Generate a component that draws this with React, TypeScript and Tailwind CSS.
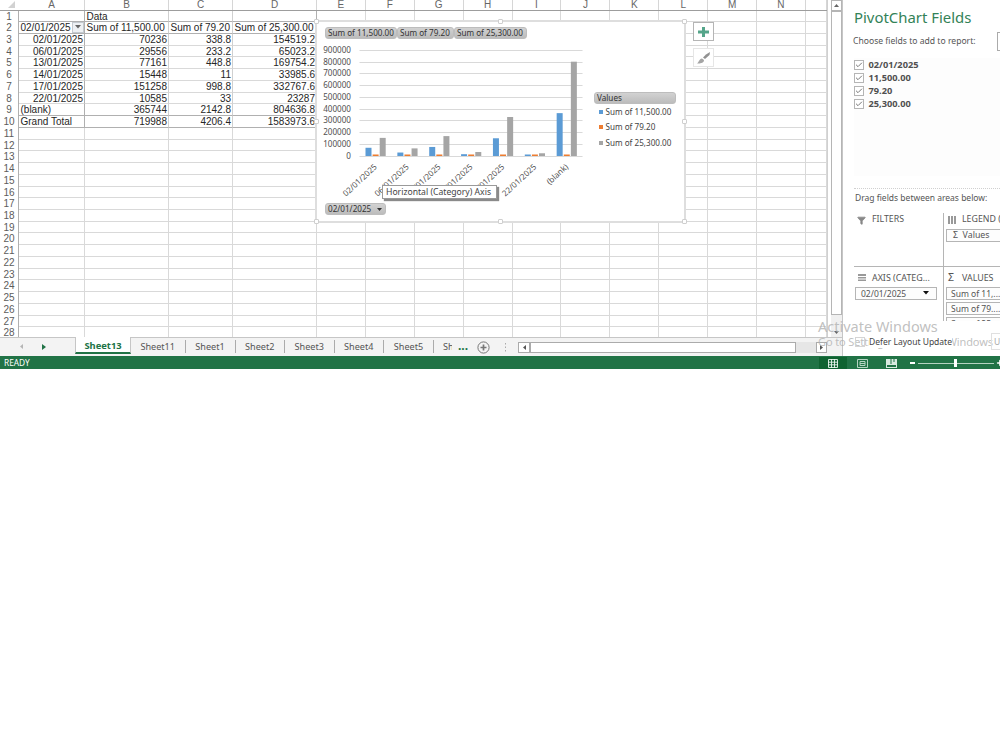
import React from 'react';
import { Filter, Plus, Check } from 'lucide-react';

interface Column {
  name: string;
  width: string;
}

const columns: Column[] = [
  { name: 'A', width: 'w-[66px]' },
  { name: 'B', width: 'w-[84px]' },
  { name: 'C', width: 'w-[64px]' },
  { name: 'D', width: 'w-[84px]' },
  ...['E', 'F', 'G', 'H', 'I', 'J', 'K', 'L', 'M', 'N'].map(name => ({ name, width: 'w-[48.9px]' })),
  { name: '', width: 'w-[21px]' }
];

const cells: string[][] = [
  ['', 'Data', '', ''],
  ['02/01/2025', 'Sum of 11,500.00', 'Sum of 79.20', 'Sum of 25,300.00'],
  ['02/01/2025', '70236', '338.8', '154519.2'],
  ['06/01/2025', '29556', '233.2', '65023.2'],
  ['13/01/2025', '77161', '448.8', '169754.2'],
  ['14/01/2025', '15448', '11', '33985.6'],
  ['17/01/2025', '151258', '998.8', '332767.6'],
  ['22/01/2025', '10585', '33', '23287'],
  ['(blank)', '365744', '2142.8', '804636.8'],
  ['Grand Total', '719988', '4206.4', '1583973.6']
];

const series = [
  { label: 'Sum of 11,500.00', color: '#5b9bd5', swatch: 'bg-[#5b9bd5]', column: 1 },
  { label: 'Sum of 79.20', color: '#ed7d31', swatch: 'bg-[#ed7d31]', column: 2 },
  { label: 'Sum of 25,300.00', color: '#a5a5a5', swatch: 'bg-[#a5a5a5]', column: 3 }
];

const sheets = ['Sheet11', 'Sheet1', 'Sheet2', 'Sheet3', 'Sheet4', 'Sheet5'];
const sheetWidths = ['w-[54.5px]', 'w-[50px]', 'w-[49.5px]', 'w-[49.5px]', 'w-[49.5px]', 'w-[50px]'];

const cellBorder = (row: number, col: number) => {
  if (col > 3 || row > 9) return 'border-r-[#d9d9d9] border-b-[#d9d9d9]';
  const right = col === 0 || col === 3 ? 'border-r-[#b0b0b0]' : 'border-r-[#d0d0d0]';
  const bottom = row < 2 || row > 7 ? 'border-b-[#b0b0b0]' : 'border-b-[#d9d9d9]';
  return `${right} ${bottom}`;
};

const Grid: React.FC = () => (
  <div className="w-[827px] h-[337px] shrink-0 overflow-hidden font-['Liberation_Sans',sans-serif] text-[10px] text-[#262626]">
    <div className="flex h-[10.5px] text-[#666] border-b border-[#9d9d9d] bg-white">
      <div className="w-[19px] shrink-0 flex items-end justify-end pr-1 pb-0.5">
        <svg width="7" height="7" viewBox="0 0 7 7"><path d="M7 0V7H0Z" fill="#d2d2d2" /></svg>
      </div>
      {columns.map((c, i) => (
        <div key={i} className={`${c.width} shrink-0 border-r border-[#d6d6d6] text-center leading-[10px]`}>{c.name}</div>
      ))}
    </div>
    {Array.from({ length: 28 }, (_, r) => (
      <div key={r} className="flex h-[11.74px]">
        <div className="w-[19px] shrink-0 border-r border-[#b0b0b0] text-center leading-[12px] text-[#5c5c5c]">{r + 1}</div>
        {columns.map((c, i) => {
          const text = i < 4 ? cells[r]?.[i] ?? '' : '';
          const alignLeft = r < 2 || text.startsWith('(') || text.startsWith('Grand');
          return (
            <div
              key={i}
              className={`${c.width} shrink-0 flex border-r border-b leading-[12px] whitespace-nowrap ${cellBorder(r, i)} ${alignLeft ? 'pl-[1.5px]' : 'justify-end pr-px'}`}
            >
              {text}
              {r === 1 && i === 0 && (
                <span className="ml-auto w-[12px] h-[10.5px] border border-[#c4cad0] bg-[#eef1f4] flex items-center justify-center">
                  <svg width="6" height="4" viewBox="0 0 6 4"><path d="M0 0H6L3 3.5Z" fill="#666" /></svg>
                </span>
              )}
            </div>
          );
        })}
      </div>
    ))}
  </div>
);

const PLOT_LEFT = 43.5;
const PLOT_BOTTOM = 134.5;
const GROUP = 31.86;
const UNIT = 11.72;

const Plot: React.FC = () => (
  <svg width="270" height="180" viewBox="0 0 270 180" className="font-['Noto_Sans',sans-serif]" fontSize="8.1" fill="#505050">
    {Array.from({ length: 10 }, (_, i) => {
      const y = PLOT_BOTTOM - i * UNIT;
      return (
        <g key={i}>
          <line x1={PLOT_LEFT} x2={PLOT_LEFT + 7 * GROUP} y1={Math.round(y) + 0.5} y2={Math.round(y) + 0.5} stroke="#d9d9d9" />
          <text x="35" y={y + 3} textAnchor="end">{i * 100000}</text>
        </g>
      );
    })}
    {cells.slice(2, 9).map((row, i) => {
      const x = PLOT_LEFT + i * GROUP;
      return (
        <g key={i}>
          {series.map((s, j) => {
            const h = Math.max((Number(row[s.column]) / 100000) * UNIT, 1.5);
            return <rect key={j} x={x + 6 + j * 7.1} y={PLOT_BOTTOM + 0.5 - h} width="6" height={h} fill={s.color} />;
          })}
          <text textAnchor="end" transform={`translate(${x + 18} ${PLOT_BOTTOM + 12}) rotate(-43)`}>{row[0]}</text>
        </g>
      );
    })}
  </svg>
);

const handles = [
  'left-[-2px] top-[-2px]',
  'left-[182px] top-[-2px]',
  'left-[366px] top-[-2px]',
  'left-[-2px] top-[98px]',
  'left-[366px] top-[98px]',
  'left-[-2px] top-[198px]',
  'left-[182px] top-[198px]',
  'left-[366px] top-[198px]'
];

const fieldButton = 'h-[12px] rounded-[3px] border border-[#bdbdbd] bg-linear-to-b from-[#d2d2d2] to-[#bcbcbc] pl-[2px] leading-[10px] whitespace-nowrap text-[#333]';

const PivotChart: React.FC = () => (
  <div className="absolute left-[316px] top-[21px] w-[369px] h-[201px] bg-white outline-2 outline-[#dedede] -outline-offset-1 font-['Noto_Sans',sans-serif] text-[8.15px] text-[#444]">
    <div className="absolute left-0 top-0"><Plot /></div>
    <div className="flex pt-[6px] pl-[9px]">
      <div className={`${fieldButton} w-[72px]`}>Sum of 11,500.00</div>
      <div className={`${fieldButton} w-[57px]`}>Sum of 79.20</div>
      <div className={`${fieldButton} w-[73px]`}>Sum of 25,300.00</div>
    </div>
    <div className="ml-[278px] mt-[53px] w-[82px]">
      <div className={fieldButton}>Values</div>
      <div className="flex flex-col pl-[5px]">
        {series.map(s => (
          <div key={s.label} className="flex items-center gap-[2.5px] h-[15.5px] whitespace-nowrap">
            <span className={`size-[4px] shrink-0 ${s.swatch}`} />
            {s.label}
          </div>
        ))}
      </div>
    </div>
    <div className={`${fieldButton} relative mt-[52.5px] ml-[9px] w-[61px] flex items-center gap-[6px]`}>
      02/01/2025
      <svg width="5" height="3" viewBox="0 0 5 3"><path d="M0 0H5L2.5 3Z" fill="#333" /></svg>
    </div>
    <div className="absolute left-[66px] top-[164px] w-[115px] h-[14px] border border-[#9a9a9a] bg-white shadow-[2px_2px_1px_#8a8a8a] text-[8.65px] leading-[12px] pl-[3px] whitespace-nowrap">
      Horizontal (Category) Axis
    </div>
    {handles.map(h => (
      <span key={h} className={`absolute ${h} size-[5px] rounded-[1px] border border-[#cfcfcf] bg-white`} />
    ))}
  </div>
);

const ChartButtons: React.FC = () => (
  <div className="absolute left-[693px] top-[22px] flex flex-col gap-[7px]">
    <div className="w-[21px] h-[19px] border border-[#b5b5b5] bg-white flex items-center justify-center">
      <svg width="11" height="10" viewBox="0 0 11 10"><path d="M4 0H7V3.5H11V6.5H7V10H4V6.5H0V3.5H4Z" fill="#55a58a" /></svg>
    </div>
    <div className="w-[21px] h-[19px] border border-[#e6e6e6] bg-white flex items-center justify-center">
      <svg width="15" height="14" viewBox="0 0 15 14">
        <path d="M14 1L13.5 4L9 8L7 6.5L10 3.5Z" fill="#919191" />
        <path d="M6 7.5L8 9C8 12 4.5 12.8 1 12.5C3 11.5 3 8 6 7.5Z" fill="#a5a5a5" />
      </svg>
    </div>
  </div>
);

const VerticalScroll: React.FC = () => (
  <div className="w-[16px] h-[337px] pl-[3px] flex flex-col bg-white border-l border-r border-l-[#d0d0d0] border-r-[#c6c6c6]">
    <div className="w-[11px] h-[10.5px] border border-[#b5b5b5] bg-white flex items-center justify-center">
      <svg width="5" height="3" viewBox="0 0 5 3"><path d="M0 3H5L2.5 0Z" fill="#666" /></svg>
    </div>
    <div className="w-[11px] h-[304.5px] border border-[#b5b5b5] bg-white" />
    <div className="w-[11px] flex-1 flex justify-center items-end pb-[3px] bg-[#f0f0f0]">
      <svg width="5" height="3" viewBox="0 0 5 3"><path d="M0 0H5L2.5 3Z" fill="#666" /></svg>
    </div>
  </div>
);

const SheetTabs: React.FC = () => (
  <div className="flex h-[19px] w-[843px] items-start bg-[#f3f3f3] border-t border-r border-[#c6c6c6] font-['Noto_Sans',sans-serif] text-[9.1px] text-[#555] whitespace-nowrap">
    <div className="w-[75px] h-[17px] shrink-0 flex items-center pl-[20px] gap-[19px]">
      <svg width="3" height="5" viewBox="0 0 3 5"><path d="M3 0V5L0 2.5Z" fill="#b5b5b5" /></svg>
      <svg width="4" height="6" viewBox="0 0 4 6"><path d="M0 0V6L4 3Z" fill="#217346" /></svg>
    </div>
    <div className="w-[56px] h-[17px] shrink-0 -mt-px bg-white border-x border-[#c6c6c6] border-b-2 border-b-[#217346] text-center text-[9.4px] font-bold text-[#217346] leading-[18px]">Sheet13</div>
    {sheets.map((s, i) => (
      <div key={s} className={`${sheetWidths[i]} shrink-0 h-[13px] mt-[2px] border-r border-[#ababab] text-center leading-[13px]`}>{s}</div>
    ))}
    <div className="w-[9px] shrink-0 ml-[9px] mt-[2px] overflow-hidden leading-[13px]">Sh</div>
    <div className="ml-[6px] mt-[1px] shrink-0 text-[12px] font-bold leading-[13px] text-[#217346] w-[19px]">...</div>
    <svg width="13" height="13" viewBox="0 0 13 13" className="shrink-0 mt-[2.5px]" fill="none" stroke="#777">
      <circle cx="6.5" cy="6.5" r="5.6" />
      <path d="M6.5 3.5V9.5M3.5 6.5H9.5" strokeWidth="1.7" />
    </svg>
    <svg width="3" height="9" viewBox="0 0 3 9" className="shrink-0 ml-[14px] mt-[5px]" fill="#aaa">
      <path d="M1 0H2V1.5H1ZM1 3.5H2V5H1ZM1 7H2V8.5H1Z" />
    </svg>
    <div className="ml-[11px] mt-[4px] flex h-[11px] w-[309px] shrink-0 bg-[#e6e6e6]">
      <div className="w-[12px] border border-[#ababab] bg-white flex items-center justify-center">
        <svg width="3" height="5" viewBox="0 0 3 5"><path d="M3 0V5L0 2.5Z" fill="#555" /></svg>
      </div>
      <div className="w-[266px] border border-[#ababab] bg-white" />
      <div className="ml-auto w-[11px] border border-[#ababab] bg-white flex items-center justify-center">
        <svg width="3" height="5" viewBox="0 0 3 5"><path d="M0 0V5L3 2.5Z" fill="#555" /></svg>
      </div>
    </div>
  </div>
);

const areaItem = 'h-[13px] shrink-0 border border-[#b5b5b5] bg-[#fdfdfd] leading-[11px] whitespace-nowrap';

const FieldsPane: React.FC = () => (
  <div className="w-[157px] h-[356px] shrink-0 overflow-hidden flex flex-col bg-white pl-[11px] font-['Noto_Sans',sans-serif] text-[#555] whitespace-nowrap">
    <h2 className="mt-[7px] h-[20px] text-[14.9px] leading-[20px] text-[#338257]">PivotChart Fields</h2>
    <div className="mt-[4px] h-[20px] flex items-center text-[8.6px]">
      <span className="w-[144px] shrink-0 -ml-px">Choose fields to add to report:</span>
      <span className="w-[20px] h-[19px] shrink-0 border border-[#ababab]" />
    </div>
    <div className="mt-[7px] h-[118px] bg-[#fdfdfd] flex flex-col text-[9.25px] font-bold text-[#505050]">
      {['02/01/2025', '11,500.00', '79.20', '25,300.00'].map(f => (
        <div key={f} className="flex items-center h-[13.2px] gap-[4.5px]">
          <span className="size-[10px] border border-[#b5b5b5] bg-white flex items-center justify-center">
            <Check size={8} strokeWidth={3} className="text-[#777]" />
          </span>
          {f}
        </div>
      ))}
    </div>
    <div className="mt-[12px] border-t border-dotted border-[#d0d0d0]" />
    <div className="mt-[2px] pl-px h-[13px] text-[8.5px] leading-[13px]">Drag fields between areas below:</div>
    <div className="mt-[9px] h-[108px] w-[160px] overflow-hidden grid grid-cols-[90px_70px] grid-rows-[54px_54px] text-[8.5px]">
      <div className="border-r border-b border-[#b5b5b5] pl-[3px]">
        <div className="flex items-center h-[14px] text-[8.8px]"><Filter size={9} fill="#888" className="text-[#888] mr-[6px]" />FILTERS</div>
      </div>
      <div className="border-b border-[#b5b5b5] pl-[2px]">
        <div className="flex items-center h-[14px] text-[8.8px]">
          <svg width="8" height="8" viewBox="0 0 8 8" className="shrink-0 ml-[2px] mr-[6px]" fill="#999"><path d="M0 0H2V8H0ZM3 0H5V8H3ZM6 0H8V8H6Z" /></svg>
          LEGEND (
        </div>
        <div className={`${areaItem} mt-[2px] pl-[6px] text-[8.8px]`}>Σ&nbsp;&nbsp;Values</div>
      </div>
      <div className="border-r border-[#b5b5b5]">
        <div className="flex items-center h-[15px] mt-[3px] pl-[4px] text-[8.9px]">
          <svg width="8" height="8" viewBox="0 0 8 8" className="shrink-0 mr-[6px]" fill="#999"><path d="M0 0H8V2H0ZM0 3H8V4.5H0ZM0 5.5H8V7H0Z" /></svg>
          AXIS (CATEG...
        </div>
        <div className={`${areaItem} mt-[1.5px] ml-px w-[82px] pl-[5px] pr-[7px] flex items-center justify-between`}>
          02/01/2025
          <svg width="6" height="4" viewBox="0 0 6 4"><path d="M0 0H6L3 3.5Z" fill="#111" /></svg>
        </div>
      </div>
      <div className="pl-[2px]">
        <div className="flex items-center h-[15px] mt-[3px] pl-[2px] text-[8.9px]"><span className="w-[14px] text-[10.5px]">Σ</span>VALUES</div>
        <div className="mt-[1.5px] flex flex-col gap-[2px]">
          {['Sum of 11,...', 'Sum of 79....', 'Sum of 25,...'].map(v => (
            <div key={v} className={`${areaItem} pl-[4px]`}>{v}</div>
          ))}
        </div>
      </div>
    </div>
  </div>
);

const StatusBar: React.FC = () => (
  <div className="flex h-[13px] w-[1000px] items-center overflow-hidden bg-[#217346] pt-px pl-[4px] font-['Noto_Sans',sans-serif] text-[8.3px] text-white">
    <span className="w-[815px] shrink-0">READY</span>
    <div className="w-[28px] h-[13px] shrink-0 bg-[#0f6331] flex items-center justify-center">
      <svg width="10" height="9" viewBox="0 0 10 9" fill="none" stroke="#e8f3ec"><path d="M.5 .5H9.5V8.5H.5ZM3.5 0V9M6.5 0V9M0 3.2H10M0 5.8H10" strokeWidth=".9" /></svg>
    </div>
    <svg width="11" height="9" viewBox="0 0 11 9" className="ml-[10px] shrink-0" fill="none" stroke="#b5d3c1"><path d="M.5 .5H10.5V8.5H.5ZM3 2.5H8V6.5H3ZM3 4.5H8" /></svg>
    <svg width="11" height="9" viewBox="0 0 11 9" className="ml-[18px] shrink-0"><path d="M0 0H11V6H0ZM0 6H1V9H0ZM10 6H11V9H10ZM0 8H11V9H0Z" fill="#d9eae0" /><path d="M4.5 0H5.5V5H4.5ZM7.5 0H8.5V3H7.5Z" fill="#217346" /></svg>
    <div className="ml-[13px] flex items-center shrink-0">
      <span className="w-[5px] h-[2px] bg-white" />
      <span className="ml-[3px] w-[36px] h-px bg-[#b5d3c1]" />
      <span className="w-[3px] h-[8px] bg-white" />
      <span className="w-[37px] h-px bg-[#b5d3c1]" />
      <Plus size={8} strokeWidth={5} className="ml-[2px]" />
    </div>
  </div>
);

const App: React.FC = () => {
  return (
    <div className="relative w-[1000px] h-[750px] overflow-hidden bg-white">
      <div className="flex h-[356px]">
        <div className="w-[843px] shrink-0">
          <div className="flex">
            <Grid />
            <VerticalScroll />
          </div>
          <SheetTabs />
        </div>
        <FieldsPane />
      </div>
      <StatusBar />

      <PivotChart />
      <ChartButtons />

      {/* Activation watermark, sits over the sheet and the pane */}
      <div className="absolute left-[818px] top-[317px] w-[182px] whitespace-nowrap font-['Noto_Sans',sans-serif] text-[#b0b0b0]/80">
        <div className="text-[14.5px] leading-[18px]">Activate Windows</div>
        <div className="text-[11px] leading-[14px] tracking-[-0.13px]">Go to Settings to activate Windows</div>
      </div>
      <div className="absolute left-[855px] top-[335px] flex h-[13px] items-center font-['Noto_Sans',sans-serif] text-[8.5px] text-[#444] whitespace-nowrap">
        <span className="size-[10px] border border-[#d5d5d5]" />
        <span className="ml-[4px] bg-white leading-[13px]">Defer Layout Update</span>
      </div>
      <div className="absolute left-[991px] top-[333px] w-[9px] h-[17px] border border-r-0 border-[#e0e0e0] font-['Noto_Sans',sans-serif] text-[8.5px] leading-[15px] pl-[2px] text-[#aaa]">U</div>
    </div>
  );
};

export default App;
